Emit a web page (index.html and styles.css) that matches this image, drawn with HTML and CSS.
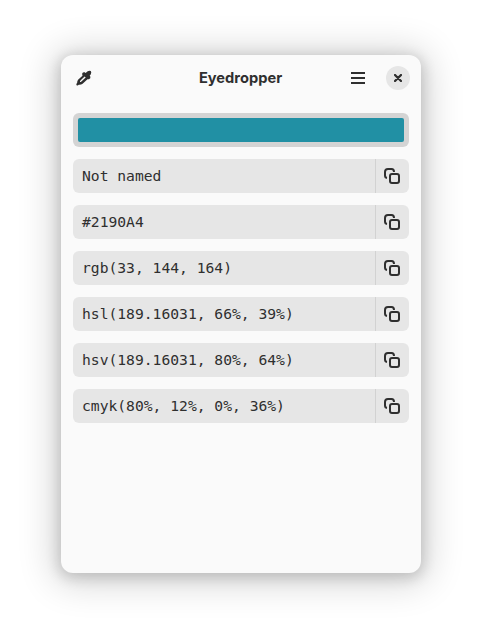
FILE: index.html
```html
<!DOCTYPE html>
<html lang="en">
<head>
<meta charset="utf-8">
<title>Eyedropper</title>
<link rel="stylesheet" href="styles.css">
</head>
<body>
<svg class="defs" width="0" height="0">
  <symbol id="copy" viewBox="0 0 16 16">
    <path d="M3 10Q1 9.7 1 7.5V4Q1 1 4 1H7.5Q10 1 10 4" fill="none" stroke="currentColor" stroke-width="2"/>
    <rect x="6" y="6" width="9" height="9" rx="2" fill="none" stroke="currentColor" stroke-width="2"/>
  </symbol>
</svg>
<main class="window">
  <header class="header">
    <button class="pick" aria-label="Pick color">
      <svg width="16" height="16" viewBox="0 0 16 16">
        <path fill="currentColor" fill-rule="evenodd" d="M10.8 2L11.7 1.3Q13.2.5 14.8 1.1Q15.8 2.6 14.7 4.4L13.7 5.5L14.4 6.8Q14.8 8.7 13 9.2L11.5 9.3L6.6 13.7Q5 15 2.8 14.8L1.7 15.6Q.2 15.8.3 14.1L1.1 12.9Q1.1 11 2.3 9.5L6.5 5.7L6.1 3.7Q6.8 2 8.7 2.3L9.6 3ZM8.6 6.5L4.7 10.3Q3.7 11.4 4 12Q4.6 12.2 5.4 11.4L9.7 7.6Z"/>
      </svg>
    </button>
    <h1 class="title">Eyedropper</h1>
    <div class="controls">
      <button class="menu" aria-label="Menu"><svg width="14" height="12" viewBox="0 0 14 12"><path fill="currentColor" d="M0 0H14V2H0ZM0 5H14V7H0ZM0 10H14V12H0Z"/></svg></button>
      <button class="close" aria-label="Close"><svg width="8" height="8" viewBox="0 0 8 8"><path d="M1 1L7 7M7 1L1 7" stroke="currentColor" stroke-width="2.3" stroke-linecap="round"/></svg></button>
    </div>
  </header>
  <section class="content">
    <div class="swatch"><div class="color"></div></div>
    <div class="row"><span class="value">Not named</span><button class="copy" aria-label="Copy"><svg width="16" height="16"><use href="#copy"/></svg></button></div>
    <div class="row"><span class="value">#2190A4</span><button class="copy" aria-label="Copy"><svg width="16" height="16"><use href="#copy"/></svg></button></div>
    <div class="row"><span class="value">rgb(33, 144, 164)</span><button class="copy" aria-label="Copy"><svg width="16" height="16"><use href="#copy"/></svg></button></div>
    <div class="row"><span class="value">hsl(189.16031, 66%, 39%)</span><button class="copy" aria-label="Copy"><svg width="16" height="16"><use href="#copy"/></svg></button></div>
    <div class="row"><span class="value">hsv(189.16031, 80%, 64%)</span><button class="copy" aria-label="Copy"><svg width="16" height="16"><use href="#copy"/></svg></button></div>
    <div class="row"><span class="value">cmyk(80%, 12%, 0%, 36%)</span><button class="copy" aria-label="Copy"><svg width="16" height="16"><use href="#copy"/></svg></button></div>
  </section>
</main>
</body>
</html>
```
FILE: styles.css
```css
* { box-sizing: border-box; }
body {
  margin: 0;
  height: 640px;
  padding: 55px 61px 67px;
  background: #fff;
  color: #2f2f2f;
  overflow: hidden;
}
.defs { display: none; }
button {
  display: flex;
  align-items: center;
  justify-content: center;
  margin: 0;
  padding: 0;
  border: 0;
  background: none;
  color: inherit;
}
svg { display: block; }
.window {
  height: 518px;
  border-radius: 12px;
  background: #fafafa;
  box-shadow:
    0 3px 14px 2px rgba(0, 0, 0, .16),
    0 3px 36px 8px rgba(0, 0, 0, .165);
}
.header {
  display: grid;
  grid-template-columns: 1fr auto 1fr;
  align-items: center;
  height: 46px;
  padding: 0 11px 0 6px;
}
.pick { width: 34px; height: 34px; }
.title {
  margin: 0 -2px 0 2px;
  font: 700 14.667px/20px Inter, sans-serif;
}
.controls {
  display: flex;
  align-items: center;
  justify-content: flex-end;
  gap: 11px;
}
.menu { width: 34px; height: 34px; }
.close {
  width: 24px;
  height: 24px;
  border-radius: 50%;
  background: #e6e6e6;
}
.content {
  display: flex;
  flex-direction: column;
  gap: 12px;
  padding: 12px;
}
.swatch {
  height: 34px;
  padding: 5px;
  border-radius: 6px;
  background: #d4d4d4;
}
.color {
  height: 24px;
  border-radius: 2px;
  background: #2190a4;
}
.row {
  display: flex;
  height: 34px;
  border-radius: 6px;
  background: #e6e6e6;
}
.value {
  flex: 1;
  padding-left: 9px;
  font: 14.667px/34px "DejaVu Sans Mono", monospace;
  white-space: pre;
}
.copy {
  width: 34px;
  padding-right: 1px;
  border-left: 1px solid #d2d2d2;
}
```
